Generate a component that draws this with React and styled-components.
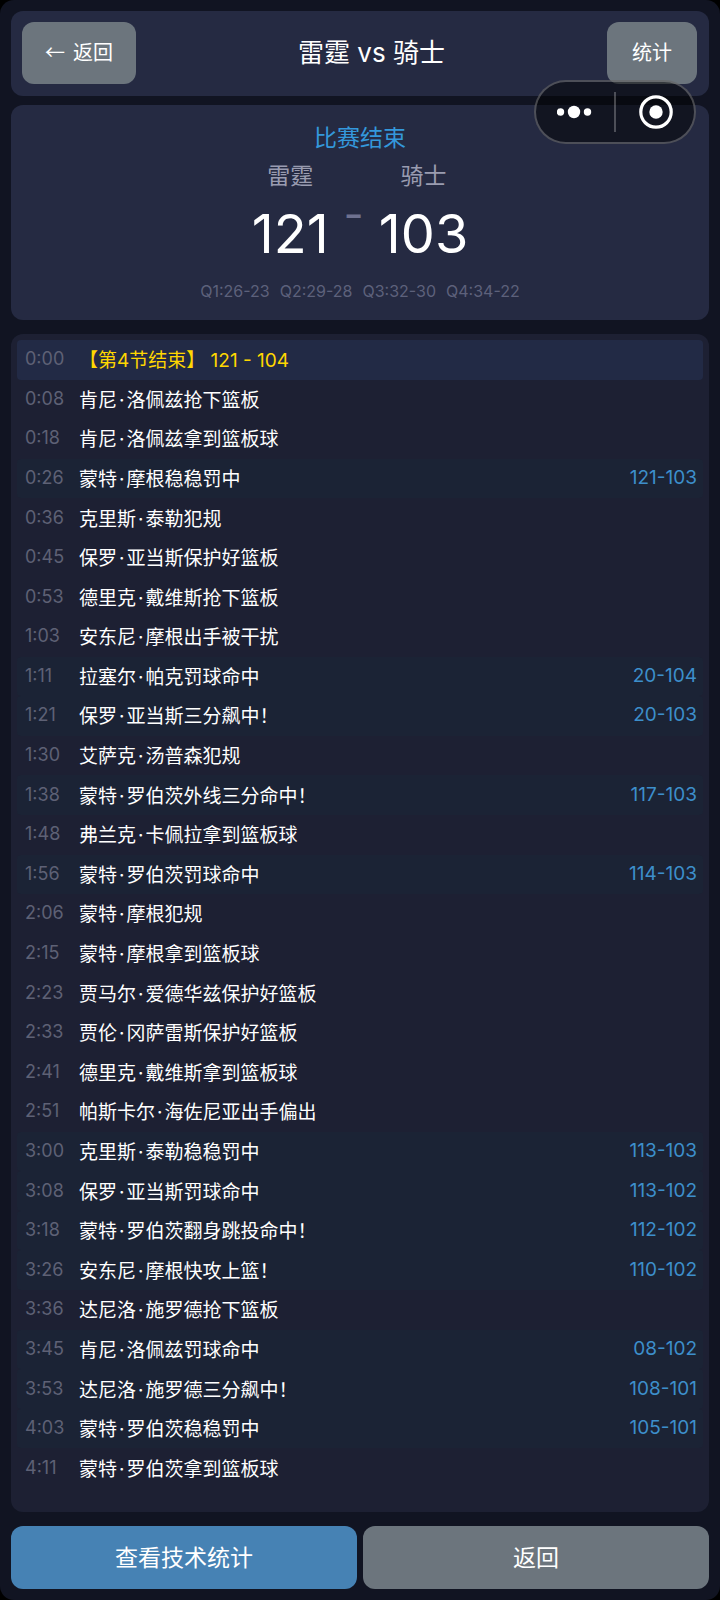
import React, { Fragment } from 'react';
import styled, { createGlobalStyle } from 'styled-components';

const GlobalStyle = createGlobalStyle`
    * {
        box-sizing: border-box;
    }
    body {
        margin: 0;
        background: #000;
        font-family: Inter, "Noto Sans CJK SC", sans-serif;
    }
    button {
        font-family: inherit;
    }
`

const Page = styled.div`
    position: relative;
    display: flex;
    flex-direction: column;
    min-height: 100vh;
    padding: 11px;
    border-radius: 14px;
    background: #111422;
    color: #fff;
`

const Header = styled.header`
    display: flex;
    align-items: center;
    justify-content: space-between;
    padding: 11px 12px 12px 11px;
    border-radius: 12px;
    background: #252a42;
`

const Title = styled.h1`
    margin: 0;
    font-size: 26px;
    line-height: 32px;
    font-weight: 400;
`

const Button = styled.button`
    display: flex;
    align-items: center;
    justify-content: center;
    gap: 8px;
    flex: ${props => props.$grow ? '1' : 'none'};
    height: ${props => props.$grow ? '63px' : '62px'};
    padding: 0 ${props => props.$wide ? '23px' : '25px'} 3px;
    border: 0;
    border-radius: 12px;
    background: ${props => props.$primary ? '#4682b4' : '#6c757d'};
    color: #fff;
    font-size: ${props => props.$grow ? '23px' : '20px'};
    cursor: pointer;
`

const Arrow = styled.span`
    font-family: "Noto Sans CJK SC", sans-serif;
`

const Capsule = styled.div`
    position: absolute;
    top: 80px;
    right: 24px;
    display: flex;
    align-items: center;
    width: 162px;
    height: 64px;
    border: 2px solid rgba(255, 255, 255, 0.25);
    border-radius: 32px;
    background: rgba(0, 0, 0, 0.5);
`

const CapsuleButton = styled.button`
    flex: 1;
    display: flex;
    justify-content: center;
    padding: 0;
    border: 0;
    background: none;
    cursor: pointer;
`

const Divider = styled.span`
    width: 2px;
    height: 40px;
    background: rgba(255, 255, 255, 0.25);
`

const ScoreCard = styled.section`
    display: flex;
    flex-direction: column;
    align-items: center;
    margin-top: 9px;
    padding: 15px 12px 16px;
    border-radius: 12px;
    background: #252a42;
`

const Status = styled.div`
    color: #3498db;
    font-size: 23px;
    line-height: 36px;
`

const Scores = styled.div`
    display: flex;
    gap: 15px;
`

const Team = styled.div`
    display: flex;
    flex-direction: column;
    align-items: center;
`

const TeamName = styled.span`
    color: #9a9cb0;
    font-size: 23px;
    line-height: 40px;
`

const Points = styled.span`
    font-size: 54px;
    line-height: 76px;
`

const Dash = styled.span`
    padding-top: 40px;
    color: #6e7190;
    font-size: 44px;
    line-height: 36px;
`

const Quarters = styled.div`
    display: flex;
    gap: 10px;
    margin-top: 6px;
    color: #5d617b;
    font-size: 16px;
    line-height: 26px;
`

const Feed = styled.ul`
    flex: 1;
    display: grid;
    margin: 14px 0 0;
    padding: 6px 6px 24px;
    border-radius: 12px;
    background: #1d2033;
    list-style: none;
`

const Play = styled.li`
    display: flex;
    align-items: center;
    min-height: 38px;
    padding: 0 6px 2px 8px;
    border-radius: 4px;
    background: ${props => props.$ended ? '#222a45' : props.$scored ? '#1b2335' : 'transparent'};
    color: ${props => props.$ended ? '#ffd700' : '#fff'};
    font-size: 19px;
`

const Time = styled.span`
    width: 54px;
    color: #5e6175;
    font-size: 18px;
`

const Text = styled.span`
    flex: 1;
`

const NameDot = styled.span`
    padding: 0 2px;
`

const Result = styled.span`
    color: #3d8fcb;
`

const Footer = styled.footer`
    display: flex;
    gap: 6px;
    margin-top: 14px;
`

const quarters = ['Q1:26-23', 'Q2:29-28', 'Q3:32-30', 'Q4:34-22'];

const plays = [
    ['0:00', '【第4节结束】 121 - 104'],
    ['0:08', '肯尼·洛佩兹抢下篮板'],
    ['0:18', '肯尼·洛佩兹拿到篮板球'],
    ['0:26', '蒙特·摩根稳稳罚中', '121-103'],
    ['0:36', '克里斯·泰勒犯规'],
    ['0:45', '保罗·亚当斯保护好篮板'],
    ['0:53', '德里克·戴维斯抢下篮板'],
    ['1:03', '安东尼·摩根出手被干扰'],
    ['1:11', '拉塞尔·帕克罚球命中', '20-104'],
    ['1:21', '保罗·亚当斯三分飙中！', '20-103'],
    ['1:30', '艾萨克·汤普森犯规'],
    ['1:38', '蒙特·罗伯茨外线三分命中！', '117-103'],
    ['1:48', '弗兰克·卡佩拉拿到篮板球'],
    ['1:56', '蒙特·罗伯茨罚球命中', '114-103'],
    ['2:06', '蒙特·摩根犯规'],
    ['2:15', '蒙特·摩根拿到篮板球'],
    ['2:23', '贾马尔·爱德华兹保护好篮板'],
    ['2:33', '贾伦·冈萨雷斯保护好篮板'],
    ['2:41', '德里克·戴维斯拿到篮板球'],
    ['2:51', '帕斯卡尔·海佐尼亚出手偏出'],
    ['3:00', '克里斯·泰勒稳稳罚中', '113-103'],
    ['3:08', '保罗·亚当斯罚球命中', '113-102'],
    ['3:18', '蒙特·罗伯茨翻身跳投命中！', '112-102'],
    ['3:26', '安东尼·摩根快攻上篮！', '110-102'],
    ['3:36', '达尼洛·施罗德抢下篮板'],
    ['3:45', '肯尼·洛佩兹罚球命中', '08-102'],
    ['3:53', '达尼洛·施罗德三分飙中！', '108-101'],
    ['4:03', '蒙特·罗伯茨稳稳罚中', '105-101'],
    ['4:11', '蒙特·罗伯茨拿到篮板球'],
];

const PlayText = ({ text }) => (
    <Text>
        {text.split('·').map((part, i) => (
            <Fragment key={i}>
                {i > 0 && <NameDot>·</NameDot>}
                {part}
            </Fragment>
        ))}
    </Text>
)

const App = () => (
    <>
        <GlobalStyle />
        <Page>
            <Header>
                <Button $wide><Arrow>←</Arrow>返回</Button>
                <Title>雷霆 vs 骑士</Title>
                <Button>统计</Button>
            </Header>

            <ScoreCard>
                <Status>比赛结束</Status>
                <Scores>
                    <Team>
                        <TeamName>雷霆</TeamName>
                        <Points>121</Points>
                    </Team>
                    <Dash>-</Dash>
                    <Team>
                        <TeamName>骑士</TeamName>
                        <Points>103</Points>
                    </Team>
                </Scores>
                <Quarters>
                    {quarters.map(q => <span key={q}>{q}</span>)}
                </Quarters>
            </ScoreCard>

            <Feed>
                {plays.map(([time, text, result], i) => (
                    <Play key={time} $ended={i === 0} $scored={!!result}>
                        <Time>{time}</Time>
                        <PlayText text={text} />
                        {result && <Result>{result}</Result>}
                    </Play>
                ))}
            </Feed>

            <Footer>
                <Button $grow $primary>查看技术统计</Button>
                <Button $grow>返回</Button>
            </Footer>

            <Capsule>
                <CapsuleButton aria-label="更多">
                    <svg width="36" height="14" viewBox="0 0 36 14" fill="#fff">
                        <circle cx="3.5" cy="7" r="3.7" />
                        <circle cx="17" cy="7" r="6.2" />
                        <circle cx="30.5" cy="7" r="3.7" />
                    </svg>
                </CapsuleButton>
                <Divider />
                <CapsuleButton aria-label="关闭">
                    <svg width="36" height="34" viewBox="0 0 36 34">
                        <circle cx="19" cy="17" r="15.2" fill="none" stroke="#fff" strokeWidth="3.2" />
                        <circle cx="19" cy="17" r="6.7" fill="#fff" />
                    </svg>
                </CapsuleButton>
            </Capsule>
        </Page>
    </>
)

export default App;
